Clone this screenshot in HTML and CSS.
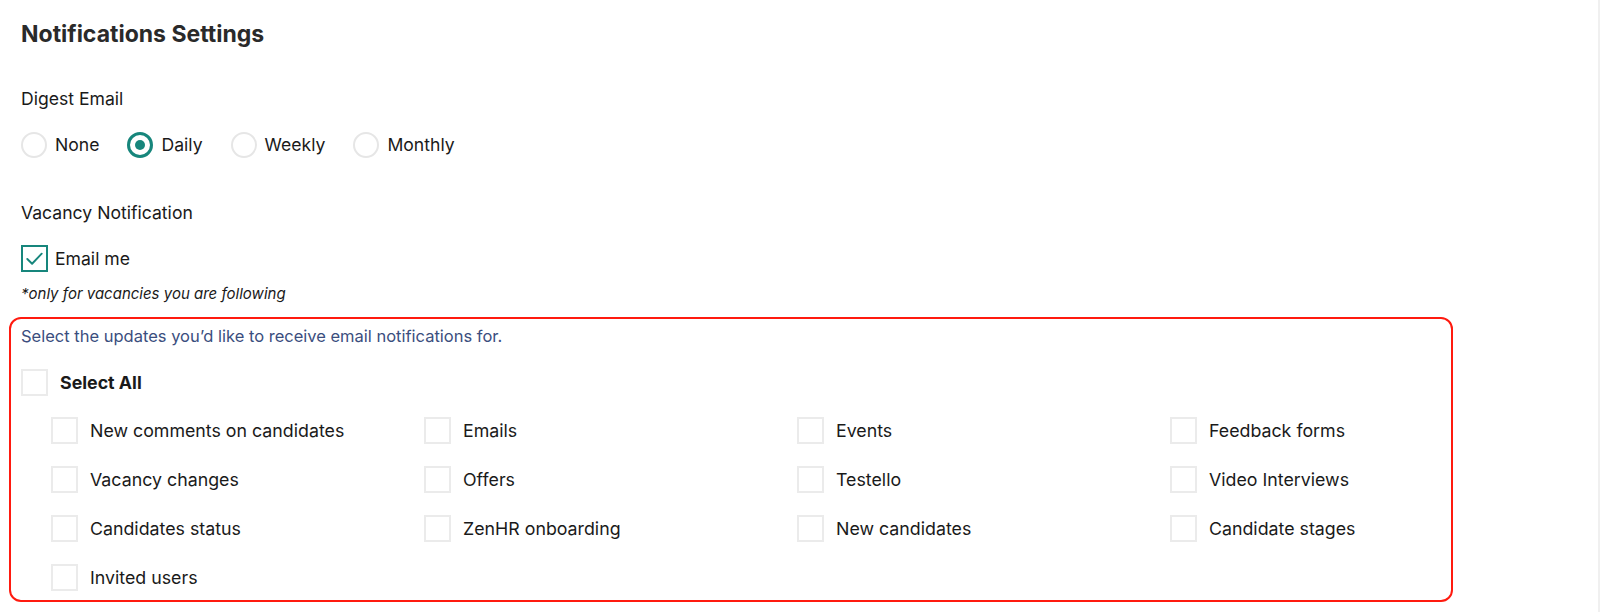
FILE: index.html
```html
<!DOCTYPE html>
<html>
<head>
<meta charset="utf-8">
<link rel="stylesheet" href="styles.css">
</head>
<body>
<div class="page">
  <h1 class="title">Notifications Settings</h1>

  <div class="label">Digest Email</div>
  <div class="radios">
    <div class="radio-item"><span class="radio"></span><span>None</span></div>
    <div class="radio-item"><span class="radio checked"></span><span>Daily</span></div>
    <div class="radio-item"><span class="radio"></span><span>Weekly</span></div>
    <div class="radio-item"><span class="radio"></span><span>Monthly</span></div>
  </div>

  <div class="label label-vacancy">Vacancy Notification</div>
  <div class="check-item email-me">
    <span class="box checked">
      <svg viewBox="0 0 24 24" width="23" height="23"><path d="M4.5 12.5l5 5L19.5 7" fill="none" stroke="#17867c" stroke-width="2" stroke-linecap="round" stroke-linejoin="round"/></svg>
    </span>
    <span>Email me</span>
  </div>
  <div class="note">*only for vacancies you are following</div>

  <div class="updates">
    <div class="hint">Select the updates you’d like to receive email notifications for.</div>
    <div class="check-item select-all"><span class="box"></span><span class="bold">Select All</span></div>
    <div class="grid">
      <div class="check-item"><span class="box"></span><span>New comments on candidates</span></div>
      <div class="check-item"><span class="box"></span><span>Emails</span></div>
      <div class="check-item"><span class="box"></span><span>Events</span></div>
      <div class="check-item"><span class="box"></span><span>Feedback forms</span></div>
      <div class="check-item"><span class="box"></span><span>Vacancy changes</span></div>
      <div class="check-item"><span class="box"></span><span>Offers</span></div>
      <div class="check-item"><span class="box"></span><span>Testello</span></div>
      <div class="check-item"><span class="box"></span><span>Video Interviews</span></div>
      <div class="check-item"><span class="box"></span><span>Candidates status</span></div>
      <div class="check-item"><span class="box"></span><span>ZenHR onboarding</span></div>
      <div class="check-item"><span class="box"></span><span>New candidates</span></div>
      <div class="check-item"><span class="box"></span><span>Candidate stages</span></div>
      <div class="check-item"><span class="box"></span><span>Invited users</span></div>
    </div>
  </div>
</div>
</body>
</html>
```

FILE: styles.css
```css
* { box-sizing: border-box; }
html, body { margin: 0; padding: 0; background: #fff; }
body {
  font-family: Inter, "Noto Sans", "Liberation Sans", sans-serif;
  color: #1a1a1a;
  font-size: 17.8px;
}
.page {
  width: 1600px;
  height: 612px;
  padding: 20px 0 0 21px;
  border-right: 2px solid #f0f0f0;
  overflow: hidden;
}
.title {
  margin: 0;
  font-size: 23px;
  line-height: 28px;
  font-weight: 700;
  color: #2a2a2a;
}
.label {
  margin-top: 39px;
  line-height: 24px;
  font-size: 17.6px;
}
.label-vacancy { margin-top: 43px; }
.radios {
  display: flex;
  gap: 28px;
  margin-top: 21px;
  height: 26px;
  font-size: 17.6px;
}
.radio-item {
  display: flex;
  align-items: center;
  gap: 8px;
  line-height: 26px;
}
.radio {
  width: 26px;
  height: 26px;
  border-radius: 50%;
  border: 2px solid #e6e6e6;
  display: flex;
  align-items: center;
  justify-content: center;
}
.radio.checked { border: 3px solid #17867c; }
.radio.checked::after {
  content: "";
  width: 10px;
  height: 10px;
  border-radius: 50%;
  background: #17867c;
}
.check-item {
  display: flex;
  align-items: center;
  gap: 12px;
  height: 27px;
  line-height: 27px;
}
.box {
  width: 27px;
  height: 27px;
  flex: none;
  border: 2px solid #ebebeb;
  display: flex;
  align-items: center;
  justify-content: center;
}
.box.checked { border-color: #17867c; }
.email-me { margin-top: 20px; gap: 7px; font-size: 17.6px; }
.note {
  margin-top: 13px;
  font-size: 15px;
  line-height: 18px;
  font-style: italic;
  color: #1a1a1a;
}
.updates {
  margin: 14px 0 0 -12px;
  width: 1444px;
  border: 2px solid #ff1a0f;
  border-radius: 12px;
  padding: 7px 10px 9px 10px;
}
.hint {
  font-size: 16.5px;
  line-height: 20px;
  color: #3b4e7e;
}
.select-all { margin-top: 23px; }
.bold { font-weight: 700; }
.grid {
  display: grid;
  grid-template-columns: repeat(4, 373px);
  row-gap: 22px;
  margin: 21px 0 0 30px;
}
```
